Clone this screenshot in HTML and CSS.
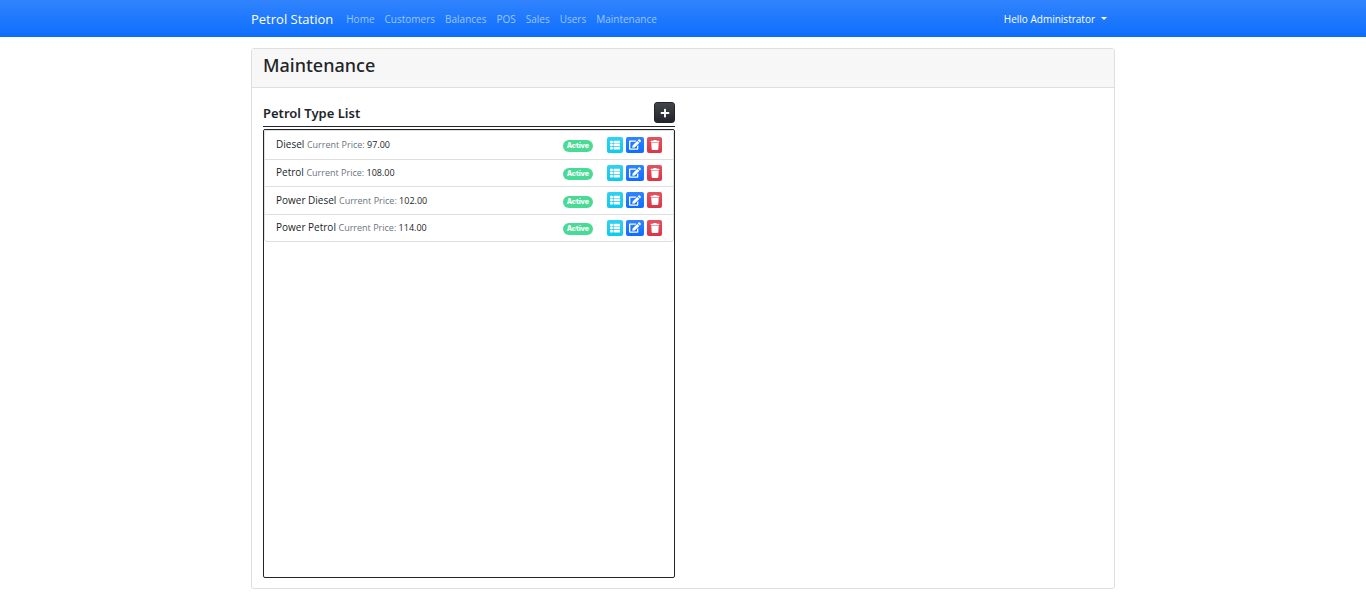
FILE: index.html
```
<!DOCTYPE html>
<html lang="en">
<head>
<meta charset="utf-8">
<meta name="viewport" content="width=device-width, initial-scale=1">
<title>Maintenance | Petrol Station</title>
<link rel="stylesheet" href="styles.css">
</head>
<body>
<svg class="sprite" aria-hidden="true">
  <symbol id="i-list" viewBox="0 0 512 512"><path d="M149.300 216v80c0 13.300-10.700 24-24 24H24c-13.300 0-24-10.700-24-24v-80c0-13.300 10.700-24 24-24h101.300c13.300 0 24 10.700 24 24zM0 376v80c0 13.300 10.700 24 24 24h101.300c13.300 0 24-10.700 24-24v-80c0-13.300-10.700-24-24-24H24c-13.300 0-24 10.700-24 24zM125.300 32H24C10.700 32 0 42.700 0 56v80c0 13.300 10.700 24 24 24h101.300c13.300 0 24-10.700 24-24V56c0-13.300-10.700-24-24-24zm80 448H488c13.300 0 24-10.700 24-24v-80c0-13.300-10.700-24-24-24H205.300c-13.300 0-24 10.700-24 24v80c0 13.300 10.700 24 24 24zm-24-424v80c0 13.300 10.700 24 24 24H488c13.300 0 24-10.700 24-24V56c0-13.300-10.700-24-24-24H205.300c-13.300 0-24 10.700-24 24zm24 264H488c13.300 0 24-10.700 24-24v-80c0-13.300-10.700-24-24-24H205.300c-13.300 0-24 10.700-24 24v80c0 13.300 10.700 24 24 24z"/></symbol>
  <symbol id="i-edit" viewBox="0 0 576 512"><path d="M402.600 83.200l90.200 90.200c3.800 3.800 3.800 10 0 13.800L274.400 405.600l-92.800 10.300c-12.400 1.400-22.900-9.100-21.500-21.500l10.300-92.800L388.800 83.200c3.800-3.800 10-3.800 13.800 0zm162-22.900l-48.800-48.800c-15.200-15.200-39.900-15.200-55.200 0l-35.400 35.400c-3.800 3.800-3.800 10 0 13.800l90.200 90.200c3.800 3.800 10 3.800 13.800 0l35.400-35.400c15.200-15.300 15.200-40 0-55.200zM384 346.200V448H64V128h229.800c3.200 0 6.200-1.300 8.500-3.500l40-40c7.600-7.600 2.200-20.500-8.500-20.500H48C21.500 64 0 85.500 0 112v352c0 26.500 21.500 48 48 48h352c26.500 0 48-21.500 48-48V306.200c0-10.700-12.900-16-20.500-8.500l-40 40c-2.200 2.300-3.500 5.300-3.500 8.500z"/></symbol>
  <symbol id="i-trash" viewBox="0 0 448 512"><path d="M432 32H312l-9.400-18.700A24 24 0 0 0 281.100 0H166.800a23.700 23.700 0 0 0-21.400 13.300L136 32H16A16 16 0 0 0 0 48v32a16 16 0 0 0 16 16h416a16 16 0 0 0 16-16V48a16 16 0 0 0-16-16zM53.200 467a48 48 0 0 0 47.900 45h245.800a48 48 0 0 0 47.900-45L416 128H32z"/></symbol>
  <symbol id="i-plus" viewBox="0 0 448 512"><path d="M416 208H272V64c0-17.700-14.300-32-32-32h-32c-17.700 0-32 14.300-32 32v144H32c-17.700 0-32 14.300-32 32v32c0 17.700 14.300 32 32 32h144v144c0 17.700 14.300 32 32 32h32c17.700 0 32-14.300 32-32V304h144c17.700 0 32-14.300 32-32v-32c0-17.700-14.300-32-32-32z"/></symbol>
</svg>
<header class="navbar">
  <div class="container navbar-inner">
    <a class="brand" href="#">Petrol Station</a>
    <nav class="nav">
      <a href="#">Home</a>
      <a href="#">Customers</a>
      <a href="#">Balances</a>
      <a href="#">POS</a>
      <a href="#">Sales</a>
      <a href="#">Users</a>
      <a href="#">Maintenance</a>
    </nav>
    <button class="user-menu" type="button" aria-haspopup="true">Hello Administrator<span class="caret"></span></button>
  </div>
</header>
<main class="container">
  <section class="card">
    <div class="card-header"><h1>Maintenance</h1></div>
    <div class="card-body">
      <div class="panel">
        <div class="panel-head">
          <h2>Petrol Type List</h2>
          <button class="btn btn-dark" type="button" aria-label="Add petrol type"><svg class="icon"><use href="#i-plus"/></svg></button>
        </div>
        <div class="list-box">
          <ul class="list">
            <li class="item">
              <div class="item-text">Diesel <small>Current Price: <span class="price">97.00</span></small></div>
              <span class="badge">Active</span>
              <div class="actions">
                <button class="btn btn-info" type="button" aria-label="View Diesel"><svg class="icon"><use href="#i-list"/></svg></button>
                <button class="btn btn-primary" type="button" aria-label="Edit Diesel"><svg class="icon icon-edit"><use href="#i-edit"/></svg></button>
                <button class="btn btn-danger" type="button" aria-label="Delete Diesel"><svg class="icon"><use href="#i-trash"/></svg></button>
              </div>
            </li>
            <li class="item">
              <div class="item-text">Petrol <small>Current Price: <span class="price">108.00</span></small></div>
              <span class="badge">Active</span>
              <div class="actions">
                <button class="btn btn-info" type="button" aria-label="View Petrol"><svg class="icon"><use href="#i-list"/></svg></button>
                <button class="btn btn-primary" type="button" aria-label="Edit Petrol"><svg class="icon icon-edit"><use href="#i-edit"/></svg></button>
                <button class="btn btn-danger" type="button" aria-label="Delete Petrol"><svg class="icon"><use href="#i-trash"/></svg></button>
              </div>
            </li>
            <li class="item">
              <div class="item-text">Power Diesel <small>Current Price: <span class="price">102.00</span></small></div>
              <span class="badge">Active</span>
              <div class="actions">
                <button class="btn btn-info" type="button" aria-label="View Power Diesel"><svg class="icon"><use href="#i-list"/></svg></button>
                <button class="btn btn-primary" type="button" aria-label="Edit Power Diesel"><svg class="icon icon-edit"><use href="#i-edit"/></svg></button>
                <button class="btn btn-danger" type="button" aria-label="Delete Power Diesel"><svg class="icon"><use href="#i-trash"/></svg></button>
              </div>
            </li>
            <li class="item">
              <div class="item-text">Power Petrol <small>Current Price: <span class="price">114.00</span></small></div>
              <span class="badge">Active</span>
              <div class="actions">
                <button class="btn btn-info" type="button" aria-label="View Power Petrol"><svg class="icon"><use href="#i-list"/></svg></button>
                <button class="btn btn-primary" type="button" aria-label="Edit Power Petrol"><svg class="icon icon-edit"><use href="#i-edit"/></svg></button>
                <button class="btn btn-danger" type="button" aria-label="Delete Power Petrol"><svg class="icon"><use href="#i-trash"/></svg></button>
              </div>
            </li>
          </ul>
        </div>
      </div>
    </div>
  </section>
</main>
</body>
</html>
```
FILE: styles.css
```
* { box-sizing: border-box; }

body {
  margin: 0;
  background: #fff;
  color: #212529;
  font: 400 10px/16px "Open Sans", "Noto Sans", sans-serif;
}

a { text-decoration: none; }

h1, h2, ul { margin: 0; padding: 0; }

.sprite { display: none; }

.container {
  width: 100%;
  max-width: 864px;
  margin: 0 auto;
}

.navbar {
  padding: 8px 0;
  background: #0d6efd linear-gradient(180deg, #3184fd, #0d6efd);
}

.navbar-inner {
  display: flex;
  align-items: center;
  min-height: 21px;
}

.brand {
  margin-right: 13px;
  color: #fff;
  font-size: 13px;
  line-height: 20px;
}

.nav {
  display: flex;
  gap: 10px;
}

.nav a { color: #9ec5fe; }

.user-menu {
  display: flex;
  align-items: center;
  gap: 6px;
  margin-left: auto;
  padding: 0 8px;
  border: 0;
  background: none;
  color: #fff;
  font: inherit;
}

.caret {
  border: 3px solid transparent;
  border-top-color: #fff;
  border-bottom: 0;
}

.card {
  margin: 11px 0;
  border: 1px solid #dfdfdf;
  border-radius: 3px;
}

.card-header {
  padding: 4px 11px 9px;
  border-bottom: 1px solid #dfdfdf;
  background: #f7f7f7;
}

.card-header h1 {
  font: 500 18px/25px "Noto Sans", sans-serif;
}

.card-body {
  display: grid;
  grid-template-columns: 1fr 1fr;
  gap: 16px;
  padding: 14px 11px 10px;
}

.panel-head {
  display: flex;
  align-items: center;
  justify-content: space-between;
  padding-bottom: 3px;
  border-bottom: 1px solid #212529;
}

.panel-head h2 {
  font: 600 13px/20px "Noto Sans", sans-serif;
}

.list-box {
  min-height: 449px;
  margin-top: 2px;
  border: 1px solid #212529;
  border-radius: 2px;
}

.list {
  display: grid;
  grid-auto-rows: 1fr;
  min-height: 112px;
  border: 1px solid #dfdfdf;
  border-radius: 3px;
  list-style: none;
}

.item {
  display: flex;
  align-items: center;
  padding: 0 11px;
}

.item + .item { border-top: 1px solid #dfdfdf; }

.item-text { flex: 1; }

.item small {
  color: #6c757d;
  font-size: 9px;
}

.item .price { color: #212529; }

.badge {
  margin: 3px 14px 0 0;
  padding: 0 4px;
  border-radius: 6px;
  background: #48db95;
  color: #fff;
  font: 800 7px/12px Inter, sans-serif;
}

.actions {
  display: flex;
  gap: 3px;
}

.btn {
  display: flex;
  align-items: center;
  justify-content: center;
  width: 16px;
  height: 16px;
  padding: 0;
  border: 0;
  border-radius: 2px;
  color: #fff;
}

.icon {
  width: 10px;
  height: 10px;
  fill: currentColor;
}

.icon-edit {
  width: 12px;
  height: 11px;
}

.btn-info { background: linear-gradient(180deg, #31d2f2, #0dcaf0); }

.btn-primary {
  width: 18px;
  background: linear-gradient(180deg, #3184fd, #0d6efd);
}

.btn-danger {
  width: 15px;
  background: linear-gradient(180deg, #e15361, #dc3545);
}

.btn-dark {
  width: 21px;
  height: 21px;
  border: 1px solid #212529;
  border-radius: 3px;
  background: linear-gradient(180deg, #42464b, #212529);
}
```
